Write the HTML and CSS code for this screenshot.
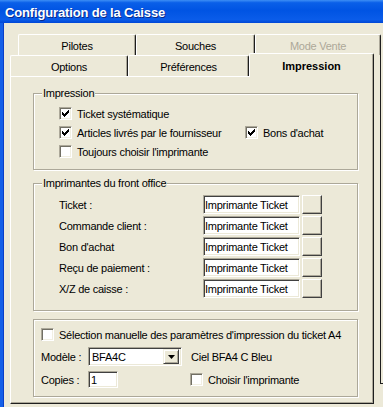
FILE: index.html
```html
<!DOCTYPE html>
<html lang="fr">
<head>
  <meta charset="UTF-8">
  <title>Configuration de la Caisse</title>
  <link rel="stylesheet" href="styles.css">
</head>
<body>
  <div class="titlebar"><span class="title">Configuration de la Caisse</span></div>

  <div class="frame">
    <div class="tabs-back">
      <div class="tab back w-pilotes">Pilotes</div>
      <div class="tab back w-souches">Souches</div>
      <div class="tab back w-mode disabled">Mode Vente</div>
    </div>

    <div class="stage">
      <div class="sheet">
        <div class="tabs-front">
          <div class="tab front w-options">Options</div>
          <div class="tab front w-prefs">Préférences</div>
          <div class="tab front w-impr active">Impression</div>
        </div>

        <div class="panel">
          <div class="group g-impression">
            <span class="legend">Impression</span>
            <div class="check-grid">
              <label class="check"><span class="box on"></span>Ticket systématique</label>
              <span></span>
              <label class="check"><span class="box on"></span>Articles livrés par le fournisseur</label>
              <label class="check"><span class="box on"></span>Bons d'achat</label>
              <label class="check"><span class="box"></span>Toujours choisir l'imprimante</label>
              <span></span>
            </div>
          </div>

          <div class="group g-printers">
            <span class="legend">Imprimantes du front office</span>
            <div class="printer-row">
              <span class="plabel">Ticket :</span>
              <span class="edit wide">Imprimante Ticket</span>
              <span class="btn"></span>
            </div>
            <div class="printer-row">
              <span class="plabel">Commande client :</span>
              <span class="edit wide">Imprimante Ticket</span>
              <span class="btn"></span>
            </div>
            <div class="printer-row">
              <span class="plabel">Bon d'achat</span>
              <span class="edit wide">Imprimante Ticket</span>
              <span class="btn"></span>
            </div>
            <div class="printer-row">
              <span class="plabel">Reçu de paiement :</span>
              <span class="edit wide">Imprimante Ticket</span>
              <span class="btn"></span>
            </div>
            <div class="printer-row">
              <span class="plabel">X/Z de caisse :</span>
              <span class="edit wide">Imprimante Ticket</span>
              <span class="btn"></span>
            </div>
          </div>

          <div class="group g-a4">
            <div class="a4-row first">
              <label class="check"><span class="box"></span>Sélection manuelle des paramètres d'impression du ticket A4</label>
            </div>
            <div class="a4-row second">
              <span class="flabel">Modèle :</span>
              <span class="combo">
                <span class="combo-text">BFA4C</span>
                <span class="combo-btn">
                  <svg width="7" height="4" viewBox="0 0 7 4"><path d="M0 0h7L3.5 4z" fill="#000"/></svg>
                </span>
              </span>
              <span class="model-name">Ciel BFA4 C Bleu</span>
            </div>
            <div class="a4-row third">
              <span class="flabel">Copies :</span>
              <span class="edit copies">1</span>
              <label class="check choose"><span class="box"></span>Choisir l'imprimante</label>
            </div>
          </div>
        </div>
      </div>

      <div class="rail">
        <div class="rail-line"></div>
        <div class="rail-foot"></div>
      </div>
    </div>
  </div>
</body>
</html>
```

FILE: styles.css
```css
body {
  margin: 0;
  width: 383px;
  height: 407px;
  overflow: hidden;
  background: #ece9d8;
  font-family: 'Liberation Sans', Arial, sans-serif;
  font-size: 11px;
  letter-spacing: -0.25px;
  color: #000;
}

/* title bar */
.titlebar {
  height: 23px;
  background: linear-gradient(#3d8ef5 0, #0a5fe8 12%, #0054e3 45%, #0a5ce9 85%, #0047d6 100%);
  display: flex;
  align-items: center;
  padding-left: 5px;
}

.title {
  color: #fff;
  font-weight: bold;
  font-size: 13px;
  letter-spacing: -0.15px;
  text-shadow: 1px 1px 0 #0a2a8a;
  margin-top: 1px;
}

.frame {
  border-left: 3px solid #1560e8;
  box-shadow: inset 1px 0 0 #0a3fc8;
  height: 384px;
  padding-top: 11px;
}

/* tabs */
.tab {
  box-sizing: border-box;
  display: flex;
  align-items: center;
  justify-content: center;
  border-top: 1px solid #fff;
  border-left: 1px solid #fff;
  border-right: 1px solid #1e1e1e;
  border-radius: 2px 2px 0 0;
  box-shadow: inset -1px 0 0 #aca899;
  background: #ece9d8;
}

.tabs-back {
  display: flex;
  margin-left: 15px;
  height: 21px;
}

.tab.back {
  height: 21px;
  padding-top: 1px;
}

.w-pilotes { width: 118px; }
.w-souches { width: 119px; }
.w-mode { width: 126px; }

.tab.disabled {
  color: #aca899;
}

.stage {
  display: flex;
  margin-top: -2px;
}

.sheet {
  margin-left: 7px;
  width: 364px;
}

.tabs-front {
  display: flex;
  align-items: flex-end;
  height: 23px;
}

.tab.front {
  height: 21px;
  padding-top: 1px;
}

.w-options { width: 118px; }
.w-prefs { width: 121px; }
.w-impr { width: 125px; }

.tab.front.active {
  height: 24px;
  margin-bottom: -1px;
  position: relative;
  z-index: 1;
  font-weight: bold;
  letter-spacing: 0;
  padding-top: 0;
}

.panel {
  box-sizing: border-box;
  height: 328px;
  border-top: 1px solid #fff;
  border-left: 1px solid #fff;
  border-right: 1px solid #1e1e1e;
  border-bottom: 1px solid #1e1e1e;
  box-shadow: inset -1px -1px 0 #aca899;
  padding-top: 16px;
}

.rail {
  width: 9px;
}

.rail-line {
  box-sizing: border-box;
  width: 7px;
  height: 330px;
  border-right: 1px solid #1e1e1e;
}

.rail-foot {
  margin-left: 6px;
  width: 3px;
  border-top: 1px solid #1e1e1e;
}

/* group boxes */
.group {
  box-sizing: border-box;
  position: relative;
  margin-left: 22px;
  width: 325px;
  border: 1px solid #aca899;
  box-shadow: inset 1px 1px 0 #fff, 1px 1px 0 #fff;
}

.legend {
  position: absolute;
  top: -7px;
  left: 8px;
  padding: 0 1px;
  line-height: 13px;
  background: #ece9d8;
}

.g-impression {
  height: 77px;
  padding: 10px 0 0 25px;
}

.g-printers {
  height: 128px;
  margin-top: 13px;
  padding: 11px 0 0 25px;
  display: flex;
  flex-direction: column;
  gap: 2px;
}

.g-a4 {
  height: 78px;
  margin-top: 8px;
  padding: 5px 0 0 7px;
}

/* checkboxes */
.check-grid {
  display: grid;
  grid-template-columns: 186px auto;
  grid-auto-rows: 19px;
}

.check {
  display: flex;
  align-items: center;
  white-space: nowrap;
}

.box {
  box-sizing: border-box;
  width: 13px;
  height: 13px;
  margin-right: 5px;
  flex: none;
  background: #fff;
  border: 1px solid;
  border-color: #aca899 #fff #fff #aca899;
  box-shadow: inset 1px 1px 0 #716f64, inset -1px -1px 0 #f1efe2;
  position: relative;
}

.box.on::after {
  content: '';
  position: absolute;
  left: 2px;
  top: 2px;
  width: 7px;
  height: 7px;
  background: url("data:image/svg+xml,%3Csvg xmlns='http://www.w3.org/2000/svg' width='7' height='7' viewBox='0 0 7 7' shape-rendering='crispEdges'%3E%3Cpath d='M6 0h1v1h-1zM5 1h2v1h-2zM0 2h1v1h-1zM4 2h3v1h-3zM0 3h2v1h-2zM3 3h3v1h-3zM0 4h5v1h-5zM1 5h3v1h-3zM2 6h1v1h-1z' fill='%23000'/%3E%3C/svg%3E") no-repeat;
}

/* printers */
.printer-row {
  display: flex;
  align-items: center;
  height: 19px;
}

.plabel {
  width: 144px;
}

.edit {
  box-sizing: border-box;
  height: 19px;
  background: #fff;
  border: 1px solid;
  border-color: #aca899 #fff #fff #aca899;
  box-shadow: inset 1px 1px 0 #404040, inset -1px -1px 0 #ece9d8;
  padding-left: 2px;
  display: flex;
  align-items: center;
  white-space: nowrap;
}

.edit.wide {
  width: 97px;
  padding-left: 1px;
}

.btn {
  box-sizing: border-box;
  width: 20px;
  height: 19px;
  margin-left: 2px;
  background: #ece9d8;
  border: 1px solid;
  border-color: #fff #404040 #404040 #fff;
  box-shadow: inset -1px -1px 0 #aca899;
}

/* A4 block */
.a4-row {
  display: flex;
  align-items: center;
}

.a4-row.first {
  height: 19px;
}

.a4-row.second {
  height: 19px;
  margin-top: 3px;
}

.a4-row.third {
  height: 17px;
  margin-top: 5px;
}

.flabel {
  width: 47px;
}

.combo {
  box-sizing: border-box;
  width: 94px;
  height: 19px;
  display: flex;
  align-items: center;
  background: #fff;
  border: 1px solid;
  border-color: #aca899 #fff #fff #aca899;
  box-shadow: inset 1px 1px 0 #404040, inset -1px -1px 0 #ece9d8;
  padding: 2px 2px 2px 3px;
}

.combo-text {
  flex: 1;
}

.combo-btn {
  box-sizing: border-box;
  width: 16px;
  height: 15px;
  display: flex;
  align-items: center;
  justify-content: center;
  background: #ece9d8;
  border: 1px solid;
  border-color: #f1efe2 #404040 #404040 #f1efe2;
  box-shadow: inset 1px 1px 0 #fff, inset -1px -1px 0 #aca899;
}

.model-name {
  margin-left: 9px;
}

.edit.copies {
  width: 30px;
  height: 17px;
}

.check.choose {
  margin-left: 72px;
}
```
